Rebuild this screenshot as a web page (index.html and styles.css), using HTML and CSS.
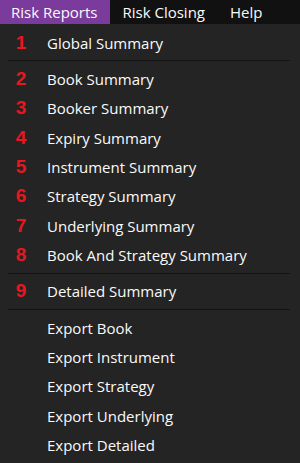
FILE: index.html
```html
<!DOCTYPE html>
<html lang="en">
<head>
    <meta charset="UTF-8">
    <meta name="viewport" content="width=device-width, initial-scale=1.0">
    <title>Risk Reports</title>
    <link rel="stylesheet" href="styles.css">
</head>
<body>
    <div class="menubar">
        <div class="menu-item active">Risk Reports</div>
        <div class="menu-item">Risk Closing</div>
        <div class="menu-item">Help</div>
    </div>
    <div class="dropdown">
        <div class="row"><span class="num">1</span><span class="label">Global Summary</span></div>
        <div class="sep"></div>
        <div class="row"><span class="num">2</span><span class="label">Book Summary</span></div>
        <div class="row"><span class="num">3</span><span class="label">Booker Summary</span></div>
        <div class="row"><span class="num">4</span><span class="label">Expiry Summary</span></div>
        <div class="row"><span class="num">5</span><span class="label">Instrument Summary</span></div>
        <div class="row"><span class="num">6</span><span class="label">Strategy Summary</span></div>
        <div class="row"><span class="num">7</span><span class="label">Underlying Summary</span></div>
        <div class="row"><span class="num">8</span><span class="label">Book And Strategy Summary</span></div>
        <div class="sep"></div>
        <div class="row"><span class="num">9</span><span class="label">Detailed Summary</span></div>
        <div class="sep"></div>
        <div class="row"><span class="num"></span><span class="label">Export Book</span></div>
        <div class="row"><span class="num"></span><span class="label">Export Instrument</span></div>
        <div class="row"><span class="num"></span><span class="label">Export Strategy</span></div>
        <div class="row"><span class="num"></span><span class="label">Export Underlying</span></div>
        <div class="row"><span class="num"></span><span class="label">Export Detailed</span></div>
    </div>
</body>
</html>
```

FILE: styles.css
```css
body {
    margin: 0;
    background-color: #242424;
    font-family: "Open Sans", "Noto Sans", sans-serif;
    font-size: 15px;
    color: #fafafa;
}
.menubar {
    display: flex;
    height: 24px;
    background-color: #111111;
}
.menu-item {
    display: flex;
    align-items: center;
    padding: 0 13px 0 12px;
    line-height: 24px;
}
.menu-item.active {
    padding-left: 11px;
    background-color: #7b3b9c;
}
.dropdown {
    padding-top: 4px;
    background-color: #242424;
}
.row {
    display: flex;
    align-items: center;
    height: 29.33px;
    padding-left: 8px;
}
.num {
    width: 26px;
    text-align: center;
    color: #e8161e;
    font-family: "Liberation Sans", Arial, sans-serif;
    font-weight: bold;
    font-size: 19px;
}
.label {
    margin-left: 13px;
}
.sep {
    height: 1px;
    margin: 3px 10px 3px 8px;
    background-color: #131313;
}
```
